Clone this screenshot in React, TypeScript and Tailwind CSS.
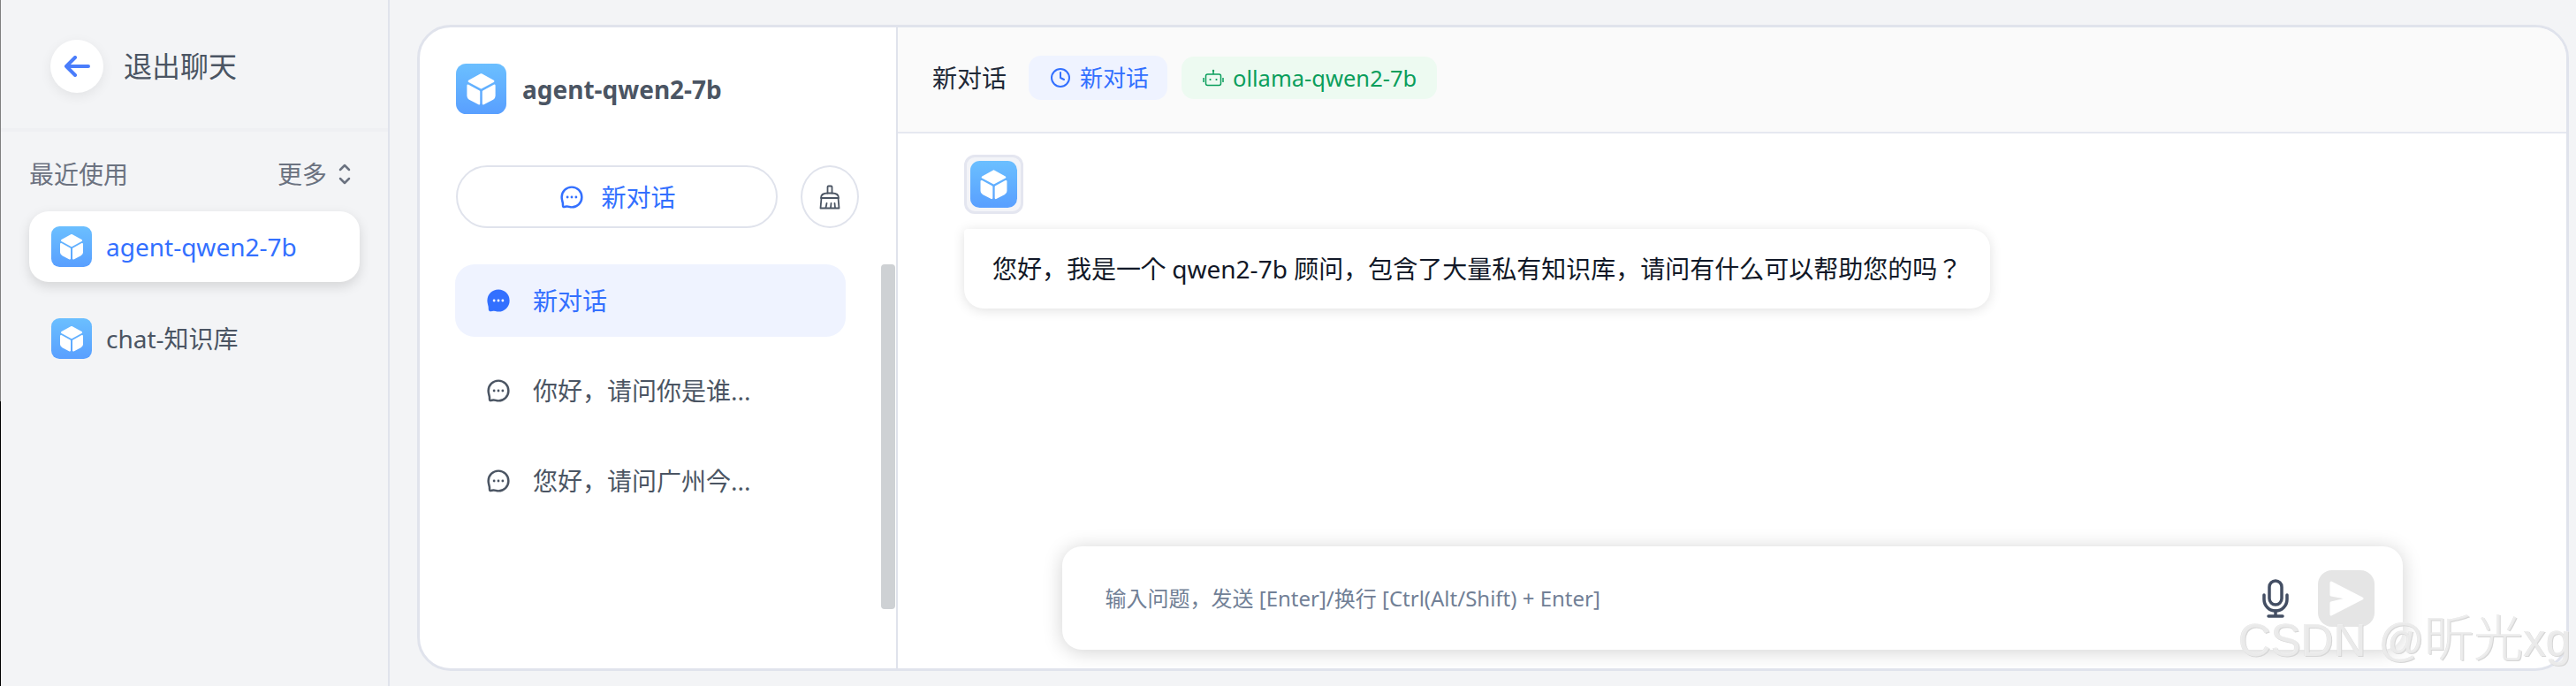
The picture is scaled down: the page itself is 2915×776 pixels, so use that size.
import { Clock } from "lucide-react";

const font = "font-['Noto_Sans','Noto_Sans_CJK_JP',sans-serif]";

function CubeIcon({ className }: { className: string }) {
  return (
    <span className={`flex shrink-0 items-center justify-center rounded-[20%] bg-gradient-to-b from-[#6bbfff] to-[#599fff] ${className}`}>
      <svg viewBox="0 0 46 46" className="h-full w-full" fill="#fff" stroke="#fff" strokeWidth="2" strokeLinejoin="round">
        <path d="M23 10 L34 16 L23 22 L12 16 Z" />
        <path d="M11 20 L21 25.500 V36.500 L12.500 32 Q11 31 11 29.500 Z" />
        <path d="M35 20 L25 25.500 V36.500 L33.500 32 Q35 31 35 29.500 Z" />
      </svg>
    </span>
  );
}

function ChatIcon({ filled, className }: { filled?: boolean; className: string }) {
  return (
    <svg viewBox="0 0 24 24" className={className} fill={filled ? "currentColor" : "none"} stroke="currentColor" strokeWidth="2.300">
      <path d="M12 1.500C17.800 1.500 22.500 6.200 22.500 12S17.800 22.500 12 22.500c-1.800 0-3.300-.8-4.800-.9-1.300-.1-3.200.8-4 .4-.8-.4-.4-2-.5-3.500C2.500 16.800 1.500 14.800 1.500 12 1.500 6.200 6.200 1.500 12 1.500Z" />
      <g fill={filled ? "#fff" : "currentColor"} stroke="none">
        <circle cx="7.500" cy="12" r="1.300" />
        <circle cx="12" cy="12" r="1.300" />
        <circle cx="16.500" cy="12" r="1.300" />
      </g>
    </svg>
  );
}

function BroomIcon() {
  return (
    <svg viewBox="0 0 24 28" className="h-[28px] w-[24px] text-[#4b5563]" fill="none" stroke="currentColor" strokeWidth="1.800" strokeLinejoin="round" strokeLinecap="round">
      <path d="M9.500 9.500V2.500a1 1 0 0 1 1-1h3a1 1 0 0 1 1 1v7" />
      <path d="M2 15c0-3.500 3-5.500 7.500-5.500h5c4.500 0 7.500 2 7.500 5.500Z" />
      <path d="M2.500 15 1.500 26.500h21L21.500 15" />
      <path d="M7.500 26l1-5M13 26l.5-5M18 26l-.5-5" />
    </svg>
  );
}

function BotIcon() {
  return (
    <svg viewBox="0 0 24 20" className="h-[20px] w-[24px] text-[#0b9e5c]" fill="none" stroke="currentColor" strokeWidth="1.500">
      <circle cx="12" cy="2" r="1.200" fill="currentColor" stroke="none" />
      <path d="M12 2v4" />
      <rect x="3.500" y="6" width="17" height="12.500" rx="2" />
      <path d="M1 10v5M23 10v5" />
      <circle cx="8.500" cy="12" r="1.100" fill="currentColor" stroke="none" />
      <circle cx="15.500" cy="12" r="1.100" fill="currentColor" stroke="none" />
    </svg>
  );
}

function Sidebar() {
  return (
    <aside className="flex h-full w-[440px] shrink-0 flex-col border-r-2 border-[#e0e3ec]">
      <div className="flex h-[149px] items-start gap-[23px] border-b-4 border-[#eff0f3] pl-[56px] pt-[45px]">
        <button className="flex h-[60px] w-[60px] items-center justify-center rounded-full bg-white shadow-[0_4px_14px_rgba(0,0,0,0.07)]">
          <svg viewBox="0 0 30 24" className="h-[24px] w-[30px] text-[#4a7dfb]" fill="none" stroke="currentColor" strokeWidth="4" strokeLinecap="round" strokeLinejoin="round">
            <path d="M28 12H3M13 2 3 12l10 10" />
          </svg>
        </button>
        <span className="text-[32px] leading-[60px] text-[#4b5563]">退出聊天</span>
      </div>
      <div className="flex items-center justify-between pl-[32px] pr-[42px] pt-[28px] text-[28px] leading-[40px] text-[#6b7280]">
        <span>最近使用</span>
        <span className="flex items-center gap-[13px]">
          更多
          <svg viewBox="0 0 14 26" className="h-[26px] w-[14px]" fill="none" stroke="currentColor" strokeWidth="2.500" strokeLinecap="round" strokeLinejoin="round">
            <path d="M2 8l5-5 5 5M2 18l5 5 5-5" />
          </svg>
        </span>
      </div>
      <div className="ml-[32px] mt-[22px] flex h-[80px] w-[374px] items-center gap-[16px] rounded-[22px] bg-white pl-[25px] shadow-[0_5px_14px_rgba(0,0,0,0.13)]">
        <CubeIcon className="h-[46px] w-[46px]" />
        <span className="text-[28px] text-[#3370ff]">agent-qwen2-7b</span>
      </div>
      <div className="ml-[32px] mt-[24px] flex h-[80px] w-[374px] items-center gap-[16px] pl-[25px]">
        <CubeIcon className="h-[46px] w-[46px]" />
        <span className="text-[28px] text-[#4b5563]">chat-知识库</span>
      </div>
    </aside>
  );
}

function ConversationPanel() {
  const rows = [
    { title: "新对话", active: true },
    { title: "你好，请问你是谁...", active: false },
    { title: "您好，请问广州今...", active: false },
  ];
  return (
    <section className="flex h-full w-[541px] shrink-0 flex-col border-r-2 border-[#e0e3ec] pl-[41px] pt-[41px]">
      <div className="flex items-center gap-[18px]">
        <CubeIcon className="h-[57px] w-[57px]" />
        <span className="text-[28px] font-bold text-[#4b5563]">agent-qwen2-7b</span>
      </div>
      <div className="mt-[58px] flex gap-[26px]">
        <button className="flex h-[71px] w-[364px] items-center justify-center gap-[20px] rounded-full border-2 border-[#e0e3ec] pl-[3px] text-[28px] text-[#3370ff]">
          <ChatIcon className="h-[26px] w-[26px]" />
          新对话
        </button>
        <button className="flex h-[71px] w-[66px] items-center justify-center rounded-[50%] border-2 border-[#e0e3ec]">
          <BroomIcon />
        </button>
      </div>
      <div className="mt-[41px] flex">
        <div className="-ml-px flex w-[442px] flex-col gap-[20px]">
          {rows.map((row) => (
            <div
              key={row.title}
              className={
                row.active
                  ? "flex h-[82px] items-center gap-[26px] rounded-[22px] bg-[#eff3ff] pl-[36px] text-[28px] text-[#3370ff]"
                  : "flex h-[82px] items-center gap-[26px] rounded-[22px] pl-[36px] text-[28px] text-[#4b5563]"
              }
            >
              <ChatIcon filled={row.active} className="h-[26px] w-[26px]" />
              {row.title}
            </div>
          ))}
        </div>
        <div className="ml-[40px] h-[390px] w-[16px] rounded-[4px] bg-[#ced1d4]" />
      </div>
    </section>
  );
}

function ChatPanel() {
  return (
    <section className="flex h-full min-w-0 flex-1 flex-col">
      <header className="flex h-[120px] shrink-0 items-center border-b-2 border-[#e6e8f0] bg-[#fafafa] pb-[4px] pl-[39px]">
        <span className="text-[28px] text-[#1f2937]">新对话</span>
        <span className="ml-[25px] flex h-[50px] w-[157px] items-center gap-[10px] rounded-[14px] bg-[#eff3ff] pl-[24px] text-[26px] text-[#3370ff]">
          <Clock className="h-[24px] w-[24px]" strokeWidth={2} />
          新对话
        </span>
        <span className="ml-[16px] flex h-[48px] w-[289px] items-center gap-[10px] rounded-[14px] bg-[#edfaf1] pl-[24px] text-[25.500px] text-[#0b9e5c]">
          <BotIcon />
          ollama-qwen2-7b
        </span>
      </header>
      <div className="flex-1 pl-[75px] pt-[24px]">
        <div className="h-[67px] w-[67px] rounded-[12px] border-[3px] border-[#e4e6f0] bg-[#f3f4f8] p-[4px]">
          <CubeIcon className="h-[53px] w-[53px]" />
        </div>
        <div className="mt-[17px] w-fit rounded-b-[22px] rounded-tr-[22px] rounded-tl-[4px] bg-white px-[32px] py-[22px] text-[28px] leading-[46px] text-[#111827] shadow-[0_2px_14px_rgba(0,0,0,0.12)]">
          您好，我是一个 qwen2-7b 顾问，包含了大量私有知识库，请问有什么可以帮助您的吗？
        </div>
      </div>
      <div className="mx-auto mb-[21px] flex h-[117px] w-[1517px] shrink-0 items-center rounded-[22px] bg-white pl-[49px] pr-[32px] shadow-[0_2px_22px_rgba(0,0,0,0.18)]">
        <span className="flex-1 text-[24px] text-[#718096]">
          输入问题，发送 [Enter]/换行 [Ctrl(Alt/Shift) + Enter]
        </span>
        <svg viewBox="0 0 30 44" className="h-[44px] w-[30px] text-[#434e63]" fill="none" stroke="currentColor" strokeWidth="3.500" strokeLinecap="round">
          <rect x="8" y="2" width="14" height="27" rx="7" />
          <path d="M2 18v5a13 13 0 0 0 26 0v-5" />
          <path d="M15 36v6M7 42h16" />
        </svg>
        <div className="ml-[33px] flex h-[64px] w-[64px] items-center justify-center rounded-[16px] bg-[#e5e5e5]">
          <svg viewBox="0 0 64 64" className="h-[64px] w-[64px]" fill="#fff" stroke="#fff" strokeWidth="3" strokeLinejoin="round">
            <path d="M15 14 L50 32 L15 50 V37 L36 32 L15 28 Z" />
          </svg>
        </div>
      </div>
    </section>
  );
}

export default function App() {
  return (
    <main className={`${font} relative flex h-[776px] w-[2915px] overflow-hidden bg-[#f3f4f6]`}>
      <div className="flex h-full w-px shrink-0 flex-col">
        <div className="h-[454px] bg-[#808080]" />
        <div className="flex-1 bg-black" />
      </div>
      <Sidebar />
      <div className="ml-[31px] mr-[8px] mt-[28px] mb-[17px] flex min-w-0 flex-1 overflow-hidden rounded-[38px] border-[3px] border-[#e0e3ec] bg-white">
        <ConversationPanel />
        <ChatPanel />
      </div>
      <span className="absolute left-[2533px] top-[687px] whitespace-nowrap font-['Liberation_Sans','Noto_Sans_CJK_JP',sans-serif] text-[51px] font-light leading-[72px] text-[#f6f6f6]/60 [text-shadow:1px_1px_0_#d6d6d6,-0.5px_-0.5px_0_#e2e2e2]">
        CSDN @<span className="text-[56px]">昕光</span>xg
      </span>
    </main>
  );
}
